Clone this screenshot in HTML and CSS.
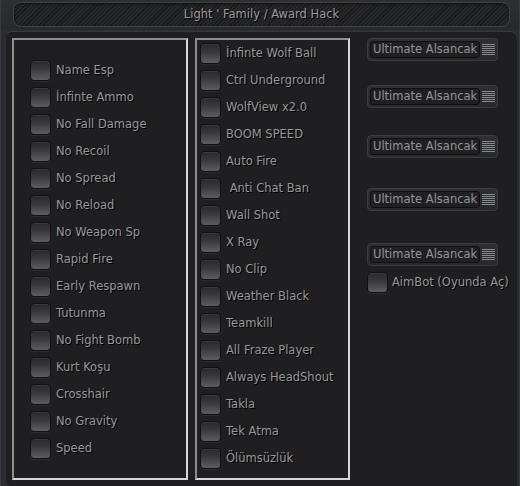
FILE: index.html
```html
<!DOCTYPE html>
<html lang="tr">
<head>
<meta charset="utf-8">
<title>Light ' Family / Award Hack</title>
<link rel="stylesheet" href="styles.css">
</head>
<body>
<div class="window">
  <div class="header">
    <div class="titlebar">Light ' Family / Award Hack</div>
  </div>
  <div class="content">
    <div class="panel panel-left">
      <label class="row"><span class="box"></span><span class="txt">Name Esp</span></label>
      <label class="row"><span class="box"></span><span class="txt">İnfinte Ammo</span></label>
      <label class="row"><span class="box"></span><span class="txt">No Fall Damage</span></label>
      <label class="row"><span class="box"></span><span class="txt">No Recoil</span></label>
      <label class="row"><span class="box"></span><span class="txt">No Spread</span></label>
      <label class="row"><span class="box"></span><span class="txt">No Reload</span></label>
      <label class="row"><span class="box"></span><span class="txt">No Weapon Sp</span></label>
      <label class="row"><span class="box"></span><span class="txt">Rapid Fire</span></label>
      <label class="row"><span class="box"></span><span class="txt">Early Respawn</span></label>
      <label class="row"><span class="box"></span><span class="txt">Tutunma</span></label>
      <label class="row"><span class="box"></span><span class="txt">No Fight Bomb</span></label>
      <label class="row"><span class="box"></span><span class="txt">Kurt Koşu</span></label>
      <label class="row"><span class="box"></span><span class="txt">Crosshair</span></label>
      <label class="row"><span class="box"></span><span class="txt">No Gravity</span></label>
      <label class="row"><span class="box"></span><span class="txt">Speed</span></label>
    </div>
    <div class="panel panel-mid">
      <label class="row"><span class="box"></span><span class="txt">İnfinte Wolf Ball</span></label>
      <label class="row"><span class="box"></span><span class="txt">Ctrl Underground</span></label>
      <label class="row"><span class="box"></span><span class="txt">WolfView x2.0</span></label>
      <label class="row"><span class="box"></span><span class="txt">BOOM SPEED</span></label>
      <label class="row"><span class="box"></span><span class="txt">Auto Fire</span></label>
      <label class="row"><span class="box"></span><span class="txt">&nbsp;Anti Chat Ban</span></label>
      <label class="row"><span class="box"></span><span class="txt">Wall Shot</span></label>
      <label class="row"><span class="box"></span><span class="txt">X Ray</span></label>
      <label class="row"><span class="box"></span><span class="txt">No Clip</span></label>
      <label class="row"><span class="box"></span><span class="txt">Weather Black</span></label>
      <label class="row"><span class="box"></span><span class="txt">Teamkill</span></label>
      <label class="row"><span class="box"></span><span class="txt">All Fraze Player</span></label>
      <label class="row"><span class="box"></span><span class="txt">Always HeadShout</span></label>
      <label class="row"><span class="box"></span><span class="txt">Takla</span></label>
      <label class="row"><span class="box"></span><span class="txt">Tek Atma</span></label>
      <label class="row"><span class="box"></span><span class="txt">Ölümsüzlük</span></label>
    </div>
    <div class="side">
      <div class="combo combo-1"><span class="combo-field">Ultimate Alsancak</span><span class="combo-btn"></span></div>
      <div class="combo combo-2"><span class="combo-field">Ultimate Alsancak</span><span class="combo-btn"></span></div>
      <div class="combo combo-3"><span class="combo-field">Ultimate Alsancak</span><span class="combo-btn"></span></div>
      <div class="combo combo-4"><span class="combo-field">Ultimate Alsancak</span><span class="combo-btn"></span></div>
      <div class="combo combo-5"><span class="combo-field">Ultimate Alsancak</span><span class="combo-btn"></span></div>
      <label class="row row-aim"><span class="box"></span><span class="txt">AimBot (Oyunda Aç)</span></label>
    </div>
  </div>
</div>
</body>
</html>
```
FILE: styles.css
```css
html, body {
  margin: 0;
  padding: 0;
  background: #1f1f21;
}
body {
  font-family: "DejaVu Sans", "Liberation Sans", sans-serif;
  font-size: 11.5px;
  color: #999999;
}
.window {
  width: 520px;
  height: 486px;
  box-sizing: border-box;
  background: #2b2c2f;
  border-left: 1px solid #3a3b3e;
  border-right: 1px solid #3a3b3e;
  display: flex;
  flex-direction: column;
  overflow: hidden;
}
.header {
  height: 30px;
  box-sizing: border-box;
  padding: 2px 9px 0 12px;
  background: linear-gradient(#2e2f32, #28292c);
  flex: none;
}
.titlebar {
  height: 25px;
  box-sizing: border-box;
  border: 1px solid #404144;
  border-radius: 8px;
  background:
    repeating-linear-gradient(135deg, #1b1b1d 0 1px, #262729 1px 3px);
  box-shadow: inset 0 1px 3px rgba(0,0,0,0.6);
  text-align: center;
  line-height: 23px;
  font-size: 11.5px;
  color: #9c9c9c;
  text-shadow: 1px 1px 0 #000;
}
.content {
  flex: 1;
  margin: 1px 2px 0 4px;
  border-top: 1px solid #38393c;
  border-left: 1px solid #2f3033;
  border-radius: 7px 7px 0 6px;
  background: #1f1f21;
  display: flex;
  align-items: flex-start;
  padding: 6px 0 0 6px;
}
.panel {
  box-sizing: border-box;
  height: 442px;
  border: 2px solid;
  border-color: #8e8e8e #d6d6d6 #d6d6d6 #8e8e8e;
  display: flex;
  flex-direction: column;
  gap: 5px;
}
.panel-left {
  width: 176px;
  padding: 19px 0 0 16px;
}
.panel-mid {
  width: 155px;
  margin-left: 7px;
  padding: 2px 0 0 3px;
}
.row {
  display: flex;
  align-items: center;
  height: 22px;
  gap: 5px;
  white-space: nowrap;
}
.box {
  flex: none;
  width: 21px;
  height: 21px;
  box-sizing: border-box;
  border-radius: 4px;
  border: 1px solid #111112;
  background: linear-gradient(#29292b, #38383a 40%, #5c5d60);
  box-shadow: inset 0 1px 0 rgba(255,255,255,0.08), 0 1px 0 rgba(255,255,255,0.06);
}
.txt {
  color: #999999;
  text-shadow: 1px 1px 0 #000;
}
.side {
  margin-left: 17px;
  display: flex;
  flex-direction: column;
}
.combo {
  width: 131px;
  height: 23px;
  box-sizing: border-box;
  border: 1px solid #3c3d40;
  border-radius: 4px;
  background: linear-gradient(#2e2f32, #28292c);
  padding: 2px;
  display: flex;
  align-items: center;
  gap: 2px;
}
.combo-2 { margin-top: 24px; }
.combo-3 { margin-top: 27px; }
.combo-4 { margin-top: 30px; }
.combo-5 { margin-top: 32px; }
.combo-field {
  width: 110px;
  height: 17px;
  box-sizing: border-box;
  border: 1px solid #0f0f10;
  border-radius: 3px;
  background: #1f2022;
  line-height: 15px;
  padding-left: 2px;
  color: #959595;
  white-space: nowrap;
  overflow: hidden;
}
.combo-btn {
  width: 13px;
  height: 11px;
  background: repeating-linear-gradient(#8a8a8a 0 1px, transparent 1px 2px);
}
.row-aim {
  margin-top: 5px;
  gap: 4px;
}
```
